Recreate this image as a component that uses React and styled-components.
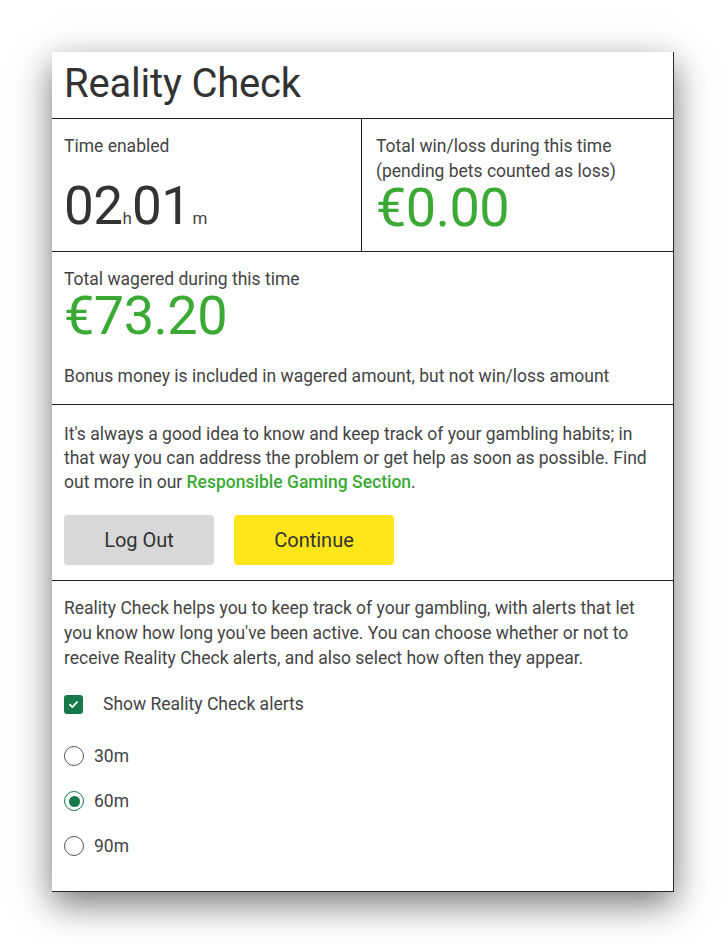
import { useState } from "react";
import styled, { createGlobalStyle } from "styled-components";

const GlobalStyle = createGlobalStyle`
  html, body {
    margin: 0;
    padding: 0;
    background: #fff;
  }
  body {
    font-family: Roboto, "Liberation Sans", Arial, sans-serif;
    color: #3a3a3a;
  }
`;

const Page = styled.div`
  padding: 52px 53px 54px 52px;
`;

const Card = styled.section`
  width: 622px;
  box-sizing: border-box;
  background: #fff;
  border-right: 1px solid #2b2b2b;
  border-bottom: 1px solid #2b2b2b;
  box-shadow: 0 12px 34px rgba(0, 0, 0, 0.55);
`;

const Header = styled.header`
  height: 67px;
  padding: 0 12px 3px;
  box-sizing: border-box;
  display: flex;
  align-items: center;
  border-bottom: 1px solid #1e1e1e;

  h1 {
    margin: 0;
    font-size: 40px;
    font-weight: 400;
    color: #333;
    letter-spacing: -0.2px;
  }
`;

const StatsRow = styled.div`
  display: grid;
  grid-template-columns: 309px 1fr;
  height: 132px;
  border-bottom: 1px solid #1e1e1e;
`;

const Cell = styled.div`
  padding: 15px ${({ $divider }) => ($divider ? "12px 0 14px" : "12px 0")};
  border-left: ${({ $divider }) => ($divider ? "1px solid #1e1e1e" : "none")};
`;

const Label = styled.div`
  font-size: 17.5px;
  line-height: 25px;
  color: #444;
`;

const Big = styled.div`
  font-size: ${({ $size }) => $size || 54}px;
  line-height: 48px;
  color: ${({ $green }) => ($green ? "#3aaa35" : "#333")};
  margin-top: ${({ $gap }) => $gap || 0}px;
  letter-spacing: -0.5px;
`;

const Unit = styled.span`
  font-size: 17px;
  font-weight: 400;
  color: #444;
  letter-spacing: 0;
  margin-left: ${({ $left }) => $left || 0}px;
`;

const Section = styled.div`
  padding: ${({ $pad }) => $pad};
  border-bottom: ${({ $last }) => ($last ? "none" : "1px solid #1e1e1e")};
`;

const Note = styled.p`
  margin: 24px 0 0;
  font-size: 17.5px;
  line-height: 24px;
  color: #444;
`;

const Text = styled.p`
  margin: 0;
  font-size: 17.5px;
  line-height: ${({ $lh }) => $lh || 24}px;
  color: #444;

  a {
    color: #3aaa35;
    font-weight: 500;
    text-decoration: none;
  }
`;

const Buttons = styled.div`
  display: flex;
  gap: 20px;
  margin-top: 21px;
`;

const Button = styled.button`
  width: ${({ $w }) => $w}px;
  height: 50px;
  border: none;
  border-radius: 4px;
  background: ${({ $primary }) => ($primary ? "#ffe619" : "#d8d8d8")};
  color: #333;
  font-family: Roboto, "Liberation Sans", Arial, sans-serif;
  font-size: 20px;
  font-weight: 400;
  cursor: pointer;
  padding: 0;
`;

const CheckRow = styled.label`
  display: flex;
  align-items: center;
  gap: 20px;
  margin-top: 23px;
  font-size: 17.5px;
  color: #444;
  cursor: pointer;
`;

const Box = styled.span`
  width: 19px;
  height: 19px;
  border-radius: 3px;
  background: #157a47;
  display: flex;
  align-items: center;
  justify-content: center;
`;

const Radios = styled.div`
  display: flex;
  flex-direction: column;
  gap: 25px;
  margin-top: 32px;
`;

const RadioRow = styled.label`
  display: flex;
  align-items: center;
  gap: 10px;
  height: 20px;
  font-size: 17.5px;
  color: #444;
  cursor: pointer;
`;

const Dot = styled.span`
  width: 20px;
  height: 20px;
  box-sizing: border-box;
  border-radius: 50%;
  border: 1px solid ${({ $on }) => ($on ? "#157a47" : "#555")};
  display: flex;
  align-items: center;
  justify-content: center;

  &::after {
    content: "";
    width: 11px;
    height: 11px;
    border-radius: 50%;
    background: ${({ $on }) => ($on ? "#157a47" : "transparent")};
  }
`;

const App = () => {
  const [interval, setInterval] = useState("60m");
  const [show, setShow] = useState(true);

  return (
    <Page>
      <GlobalStyle />
      <Card>
        <Header>
          <h1>Reality Check</h1>
        </Header>
        <StatsRow>
          <Cell>
            <Label>Time enabled</Label>
            <Big $size={53} $gap={23}>
              02<Unit>h</Unit>01<Unit $left={2}>m</Unit>
            </Big>
          </Cell>
          <Cell $divider>
            <Label>Total win/loss during this time</Label>
            <Label>(pending bets counted as loss)</Label>
            <Big $green>€0.00</Big>
          </Cell>
        </StatsRow>
        <Section $pad="15px 12px 16px">
          <Label>Total wagered during this time</Label>
          <Big $green>€73.20</Big>
          <Note>Bonus money is included in wagered amount, but not win/loss amount</Note>
        </Section>
        <Section $pad="17px 12px 15px">
          <Text>
            It's always a good idea to know and keep track of your gambling habits; in
            that way you can address the problem or get help as soon as possible. Find
            out more in our <a href="#rg">Responsible Gaming Section</a>.
          </Text>
          <Buttons>
            <Button $w={150}>Log Out</Button>
            <Button $w={160} $primary>Continue</Button>
          </Buttons>
        </Section>
        <Section $pad="15px 12px 35px" $last>
          <Text $lh={25}>
            Reality Check helps you to keep track of your gambling, with alerts that let
            you know how long you've been active. You can choose whether or not to
            receive Reality Check alerts, and also select how often they appear.
          </Text>
          <CheckRow onClick={() => setShow(!show)}>
            <Box>
              {show && (
                <svg width="11" height="11" viewBox="0 0 12 12">
                  <path d="M2.2 6.3 L4.8 8.8 L9.8 3.4" fill="none" stroke="#fff" strokeWidth="2" strokeLinecap="round" strokeLinejoin="round" />
                </svg>
              )}
            </Box>
            Show Reality Check alerts
          </CheckRow>
          <Radios>
            {["30m", "60m", "90m"].map((v) => (
              <RadioRow key={v} onClick={() => setInterval(v)}>
                <Dot $on={interval === v} />
                {v}
              </RadioRow>
            ))}
          </Radios>
        </Section>
      </Card>
    </Page>
  );
};

export default App;
